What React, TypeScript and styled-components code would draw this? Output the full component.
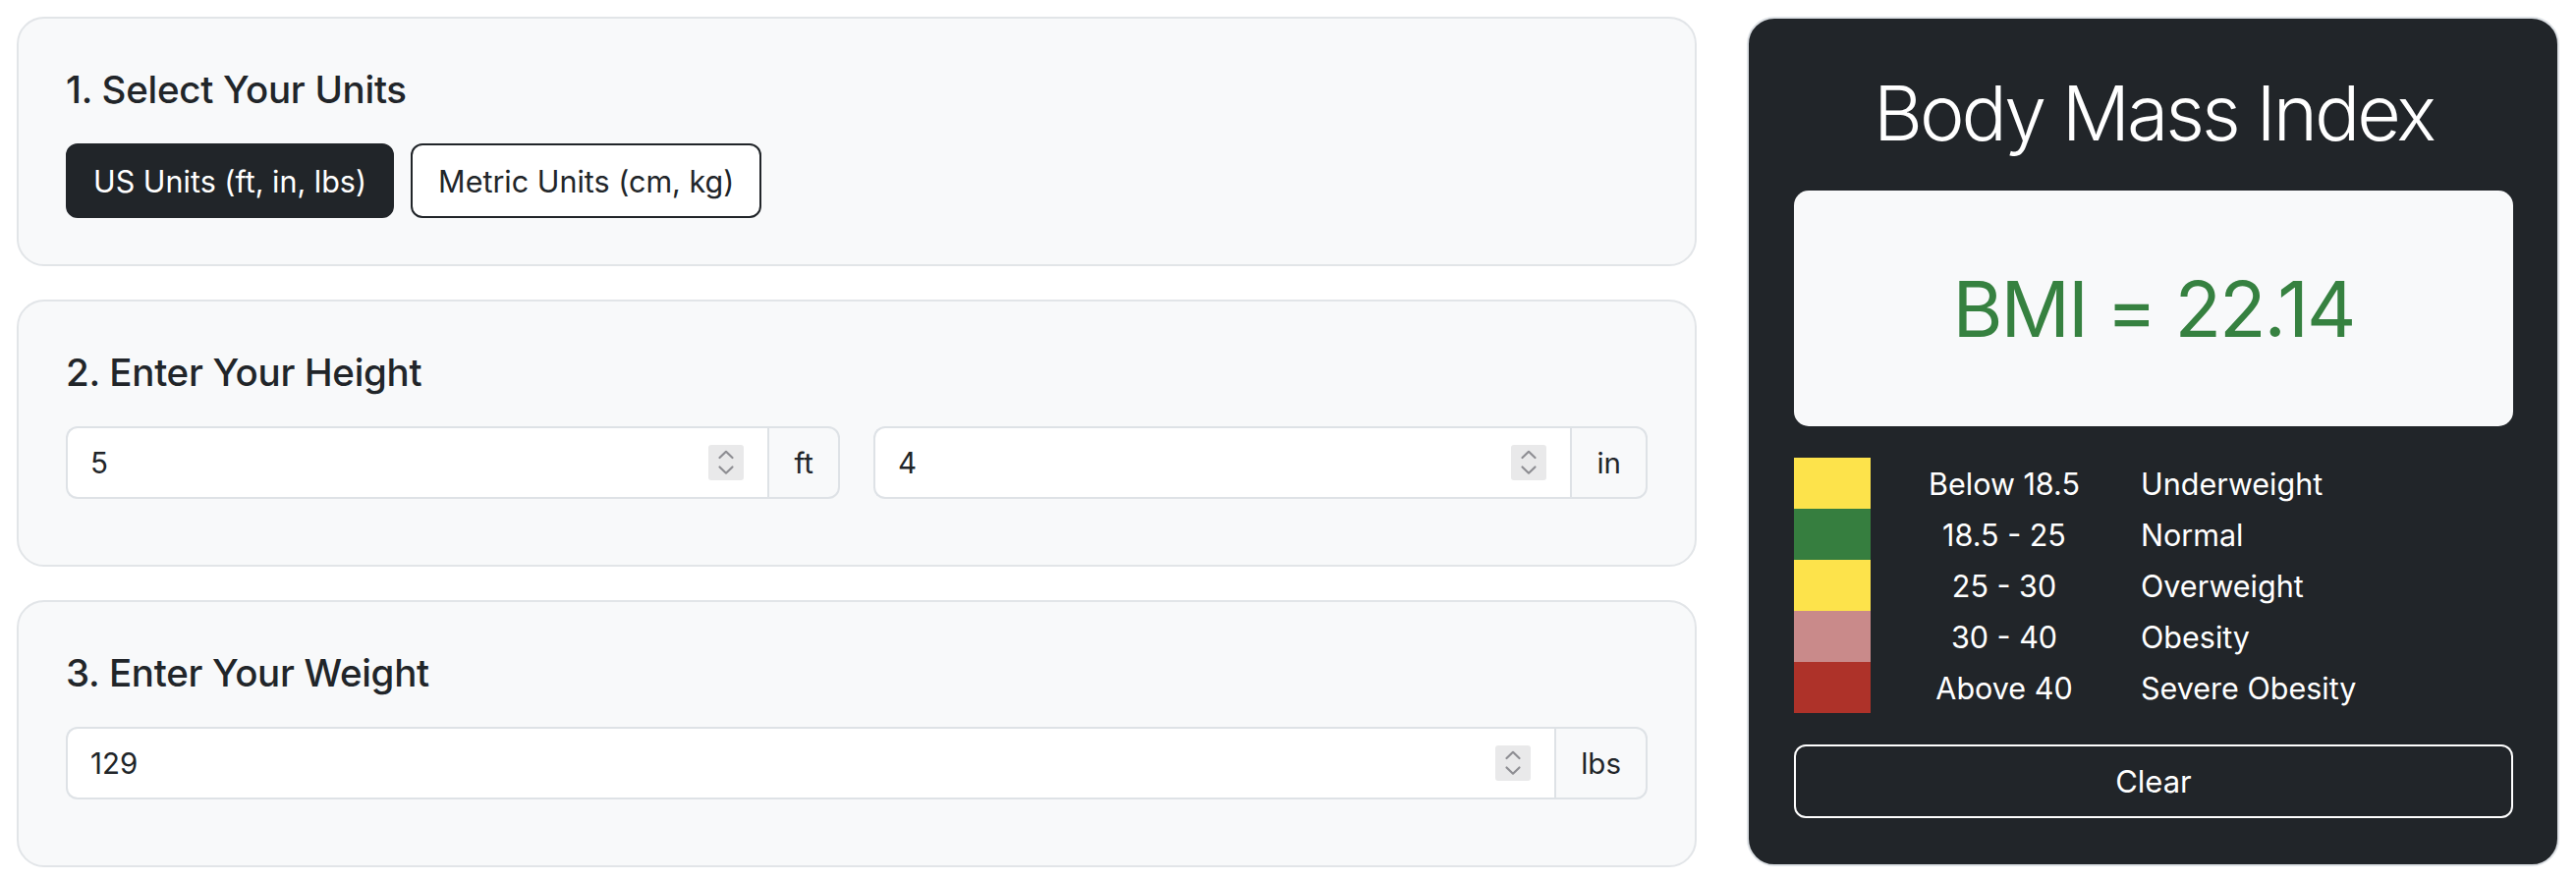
import React from "react";
import styled, { createGlobalStyle } from "styled-components";

const GlobalStyle = createGlobalStyle`
  html, body {
    margin: 0;
    padding: 0;
    background: #ffffff;
  }
  body {
    font-family: "Inter", "Noto Sans", "Liberation Sans", sans-serif;
    color: #212529;
    -webkit-font-smoothing: antialiased;
  }
  * { box-sizing: border-box; }
`;

const Page = styled.div`
  display: flex;
  align-items: flex-start;
  gap: 51px;
  padding: 17px;
  width: 2622px;
`;

const LeftColumn = styled.div`
  width: 1710px;
  display: flex;
  flex-direction: column;
  gap: 34px;
`;

const Section = styled.section`
  background: #f8f9fa;
  border: 2px solid #e2e5e8;
  border-radius: 28px;
  padding: 48px 48px 47px 48px;
`;

const SectionTitle = styled.h4`
  margin: 0 0 31px 0;
  font-size: 38.5px;
  font-weight: 500;
  line-height: 48px;
  letter-spacing: -0.3px;
  color: #212529;
`;

const ButtonRow = styled.div`
  display: flex;
  gap: 17px;
`;

const UnitButton = styled.button<{ $active?: boolean }>`
  height: 76px;
  padding: 0 26px;
  border: 2px solid #212529;
  border-radius: 12px;
  background: ${(p) => (p.$active ? "#212529" : "#ffffff")};
  color: ${(p) => (p.$active ? "#ffffff" : "#212529")};
  font-family: inherit;
  font-size: 30.5px;
  font-weight: 400;
  letter-spacing: 0;
  cursor: pointer;
`;

const FieldGrid = styled.div<{ $cols: number }>`
  display: grid;
  grid-template-columns: repeat(${(p) => p.$cols}, 1fr);
  gap: 34px;
  margin-bottom: 20px;
`;

const InputGroup = styled.div`
  display: flex;
  height: 74px;
`;

const Field = styled.div`
  flex: 1;
  display: flex;
  align-items: center;
  background: #ffffff;
  border: 2px solid #dee2e6;
  border-right: none;
  border-radius: 12px 0 0 12px;
  padding: 0 24px 0 23px;
`;

const NumberInput = styled.input`
  flex: 1;
  min-width: 0;
  border: none;
  outline: none;
  background: transparent;
  font-family: inherit;
  font-size: 29.5px;
  color: #212529;
  padding: 0;
  &::-webkit-inner-spin-button,
  &::-webkit-outer-spin-button {
    -webkit-appearance: none;
    margin: 0;
  }
  -moz-appearance: textfield;
`;

const Spinner = styled.span`
  width: 36px;
  height: 36px;
  flex: none;
  background: #e9e9ea;
  border-radius: 3px;
  display: flex;
  align-items: center;
  justify-content: center;
`;

const Addon = styled.span`
  display: flex;
  align-items: center;
  justify-content: center;
  padding: 0 25px;
  background: #f8f9fa;
  border: 2px solid #dee2e6;
  border-radius: 0 12px 12px 0;
  font-size: 29.5px;
  color: #212529;
`;

const ResultPanel = styled.aside`
  width: 827px;
  background: #212529;
  border: 2px solid #dee2e6;
  border-radius: 28px;
  padding: 48px 45px 47px 46px;
  display: flex;
  flex-direction: column;
`;

const PanelTitle = styled.h1`
  margin: 0 0 31px 0;
  text-align: center;
  color: #ffffff;
  font-size: 77px;
  font-weight: 300;
  line-height: 96px;
  letter-spacing: -3px;
`;

const ResultBox = styled.div`
  height: 240px;
  background: #f8f9fa;
  border-radius: 15px;
  display: flex;
  align-items: center;
  justify-content: center;
`;

const ResultValue = styled.span<{ $color: string }>`
  color: ${(p) => p.$color};
  font-size: 78px;
  font-weight: 400;
  letter-spacing: -2px;
`;

const Legend = styled.div`
  margin: 32px 0;
  display: flex;
  flex-direction: column;
`;

const LegendRow = styled.div`
  display: grid;
  grid-template-columns: 78px 272px 1fr;
  height: 52px;
  align-items: center;
  color: #ffffff;
  font-size: 30.5px;
`;

const Swatch = styled.span<{ $color: string }>`
  height: 52px;
  background: ${(p) => p.$color};
`;

const RangeCell = styled.span`
  text-align: center;
`;

const LabelCell = styled.span`
  padding-left: 3px;
`;

const ClearButton = styled.button`
  height: 75px;
  width: 100%;
  border: 2px solid #ffffff;
  border-radius: 12px;
  background: transparent;
  color: #ffffff;
  font-family: inherit;
  font-size: 31px;
  cursor: pointer;
`;

const SpinIcon = () => (
  <svg width="36" height="36" viewBox="0 0 36 36" fill="none">
    <polyline points="11.5,13 18,6.8 24.5,13" stroke="#8e8e93" strokeWidth="2.2" strokeLinecap="round" strokeLinejoin="round" />
    <polyline points="11.5,22.5 18,28.7 24.5,22.5" stroke="#8e8e93" strokeWidth="2.2" strokeLinecap="round" strokeLinejoin="round" />
  </svg>
);

const NumberField = ({ value, unit }: { value: string; unit: string }) => (
  <InputGroup>
    <Field>
      <NumberInput type="number" defaultValue={value} />
      <Spinner>
        <SpinIcon />
      </Spinner>
    </Field>
    <Addon>{unit}</Addon>
  </InputGroup>
);

const legend = [
  { color: "#fde34b", range: "Below 18.5", label: "Underweight" },
  { color: "#367e3f", range: "18.5 - 25", label: "Normal" },
  { color: "#fde34b", range: "25 - 30", label: "Overweight" },
  { color: "#c98a8a", range: "30 - 40", label: "Obesity" },
  { color: "#ae3229", range: "Above 40", label: "Severe Obesity" },
];

export default function App() {
  return (
    <>
      <GlobalStyle />
      <Page>
        <LeftColumn>
          <Section>
            <SectionTitle>1. Select Your Units</SectionTitle>
            <ButtonRow>
              <UnitButton $active>US Units (ft, in, lbs)</UnitButton>
              <UnitButton>Metric Units (cm, kg)</UnitButton>
            </ButtonRow>
          </Section>
          <Section>
            <SectionTitle>2. Enter Your Height</SectionTitle>
            <FieldGrid $cols={2}>
              <NumberField value="5" unit="ft" />
              <NumberField value="4" unit="in" />
            </FieldGrid>
          </Section>
          <Section>
            <SectionTitle>3. Enter Your Weight</SectionTitle>
            <FieldGrid $cols={1}>
              <NumberField value="129" unit="lbs" />
            </FieldGrid>
          </Section>
        </LeftColumn>
        <ResultPanel>
          <PanelTitle>Body Mass Index</PanelTitle>
          <ResultBox>
            <ResultValue $color="#368140">BMI = 22.14</ResultValue>
          </ResultBox>
          <Legend>
            {legend.map((row) => (
              <LegendRow key={row.label}>
                <Swatch $color={row.color} />
                <RangeCell>{row.range}</RangeCell>
                <LabelCell>{row.label}</LabelCell>
              </LegendRow>
            ))}
          </Legend>
          <ClearButton>Clear</ClearButton>
        </ResultPanel>
      </Page>
    </>
  );
}
